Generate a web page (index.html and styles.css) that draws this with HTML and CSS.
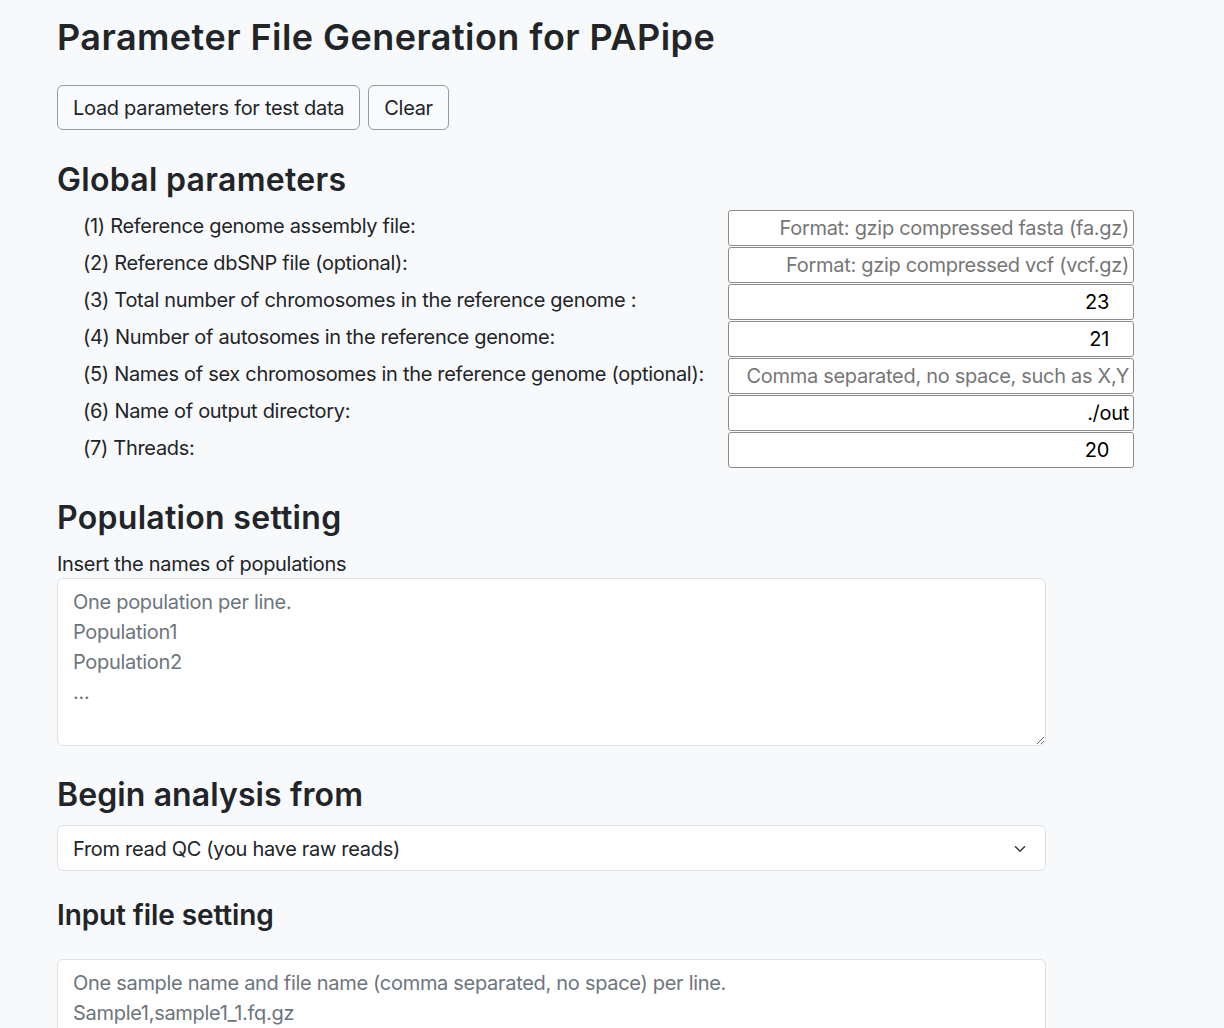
FILE: index.html
```html
<!DOCTYPE html>
<html lang="en">
<head>
<meta charset="utf-8">
<title>Parameter File Generation for PAPipe</title>
<link rel="stylesheet" href="styles.css">
</head>
<body>
<main class="page">
  <h1 class="title">Parameter File Generation for PAPipe</h1>
  <div class="actions">
    <button class="btn" type="button">Load parameters for test data</button>
    <button class="btn" type="button">Clear</button>
  </div>

  <h2 class="section section-global">Global parameters</h2>
  <div class="params">
    <label class="param-label">(1) Reference genome assembly file:</label>
    <input class="param-input" type="text" placeholder="Format: gzip compressed fasta (fa.gz)">
    <label class="param-label">(2) Reference dbSNP file (optional):</label>
    <input class="param-input" type="text" placeholder="Format: gzip compressed vcf (vcf.gz)">
    <label class="param-label">(3) Total number of chromosomes in the reference genome :</label>
    <input class="param-input num" type="text" value="23">
    <label class="param-label">(4) Number of autosomes in the reference genome:</label>
    <input class="param-input num" type="text" value="21">
    <label class="param-label">(5) Names of sex chromosomes in the reference genome (optional):</label>
    <input class="param-input" type="text" placeholder="Comma separated, no space, such as X,Y">
    <label class="param-label">(6) Name of output directory:</label>
    <input class="param-input" type="text" value="./out">
    <label class="param-label">(7) Threads:</label>
    <input class="param-input num" type="text" value="20">
  </div>

  <h2 class="section section-pop">Population setting</h2>
  <label class="field-label">Insert the names of populations</label>
  <textarea class="form-area pop-area" placeholder="One population per line.
Population1
Population2
..."></textarea>

  <h2 class="section section-begin">Begin analysis from</h2>
  <div class="select-wrap">
    <select class="form-select">
      <option>From read QC (you have raw reads)</option>
    </select>
    <svg class="chevron" width="16" height="12" viewBox="0 0 16 16" aria-hidden="true"><path d="m2 5 6 6 6-6" fill="none" stroke="#343a40" stroke-width="2" stroke-linecap="round" stroke-linejoin="round"/></svg>
  </div>

  <h3 class="subsection">Input file setting</h3>
  <textarea class="form-area input-area" placeholder="One sample name and file name (comma separated, no space) per line.
Sample1,sample1_1.fq.gz
Sample2,sample2_1.fq.gz
..."></textarea>
</main>
</body>
</html>
```

FILE: styles.css
```css
* { box-sizing: border-box; }

html, body {
  margin: 0;
  padding: 0;
  background: #f8f9fa;
}

body {
  font-family: Inter, "Noto Sans", "Liberation Sans", sans-serif;
  color: #212529;
  font-size: 20px;
  line-height: 1.5;
  letter-spacing: -0.3px;
}

.page {
  padding: 0 57px;
  height: 1028px;
  overflow: hidden;
}

.title {
  margin: 16px 0 26px;
  font-size: 36px;
  line-height: 43px;
  font-weight: 600;
  letter-spacing: 0.45px;
}

.actions {
  display: flex;
  gap: 8px;
}

.btn {
  height: 45px;
  padding: 0 15px;
  font: inherit;
  font-size: 20px;
  letter-spacing: -0.3px;
  color: #212529;
  background: #f9fafb;
  border: 1px solid #9b9b9b;
  border-radius: 6px;
}

.section {
  margin: 0;
  font-size: 32px;
  line-height: 38px;
  font-weight: 600;
  letter-spacing: 0.3px;
}

.section-global { margin-top: 31px; margin-bottom: 11px; }
.section-pop { margin-top: 30px; margin-bottom: 13px; }
.section-begin { margin-top: 30px; margin-bottom: 11px; letter-spacing: 0.1px; }

.params {
  display: grid;
  grid-template-columns: 645px 406px;
  grid-auto-rows: 37px;
  padding-left: 26px;
}

.param-label {
  align-self: center;
  padding-bottom: 6px;
  white-space: nowrap;
}

.param-input {
  height: 36px;
  width: 406px;
  font: inherit;
  font-size: 20px;
  letter-spacing: -0.3px;
  color: #000;
  text-align: right;
  padding: 0 4px 0 8px;
  background: #fff;
  border: 1px solid #8c8c8c;
  border-radius: 3px;
}

.param-input.num { padding-right: 24px; }

.param-input::placeholder { color: #767676; }

.field-label {
  display: block;
  line-height: 28px;
}

.form-area {
  display: block;
  width: 989px;
  font: inherit;
  font-size: 20px;
  letter-spacing: -0.3px;
  line-height: 30px;
  color: #212529;
  background: #fff;
  border: 1px solid #dee2e6;
  border-radius: 6px;
  padding: 8px 15px;
  resize: vertical;
}

.form-area::placeholder { color: #6c757d; }

.pop-area { height: 168px; }

.select-wrap {
  position: relative;
  width: 989px;
}

.form-select {
  display: block;
  width: 100%;
  height: 46px;
  appearance: none;
  -webkit-appearance: none;
  font: inherit;
  font-size: 20px;
  letter-spacing: -0.3px;
  color: #212529;
  background: #fff;
  border: 1px solid #dee2e6;
  border-radius: 6px;
  padding: 2px 50px 0 15px;
}

.chevron {
  position: absolute;
  right: 18px;
  top: 18px;
}

.subsection {
  margin: 27px 0 27px;
  font-size: 28px;
  line-height: 34px;
  font-weight: 600;
  letter-spacing: -0.1px;
}

.input-area { height: 168px; }
```
